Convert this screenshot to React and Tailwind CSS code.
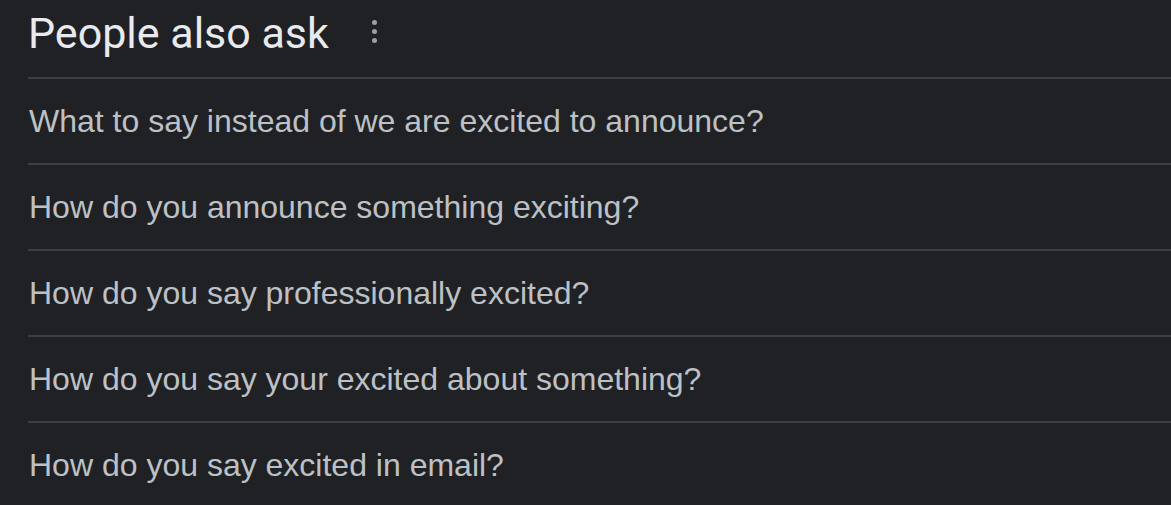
import React from "react";

const questions = [
  "What to say instead of we are excited to announce?",
  "How do you announce something exciting?",
  "How do you say professionally excited?",
  "How do you say your excited about something?",
  "How do you say excited in email?",
];

export default function App() {
  return (
    <div className="w-[1171px] h-[505px] overflow-hidden bg-[#202124] pl-[28px]">
      <div className="h-[77px] flex items-center">
        <h2
          className="text-[43px] text-[#e8eaed] leading-none pb-[10px]"
          style={{ fontFamily: "Roboto, 'Open Sans', sans-serif" }}
        >
          People also ask
        </h2>
        <button className="ml-[43px] mb-[14px] flex flex-col gap-[4px] items-center">
          <span className="block w-[5px] h-[5px] rounded-full bg-[#9aa0a6]" />
          <span className="block w-[5px] h-[5px] rounded-full bg-[#9aa0a6]" />
          <span className="block w-[5px] h-[5px] rounded-full bg-[#9aa0a6]" />
        </button>
      </div>
      {questions.map((q) => (
        <div
          key={q}
          className="h-[86px] border-t-2 border-[#3c4043] flex items-center"
        >
          <span
            className="text-[32px] text-[#bdc1c6] pl-[1px]"
            style={{ fontFamily: "'Liberation Sans', Arial, sans-serif" }}
          >
            {q}
          </span>
        </div>
      ))}
    </div>
  );
}
